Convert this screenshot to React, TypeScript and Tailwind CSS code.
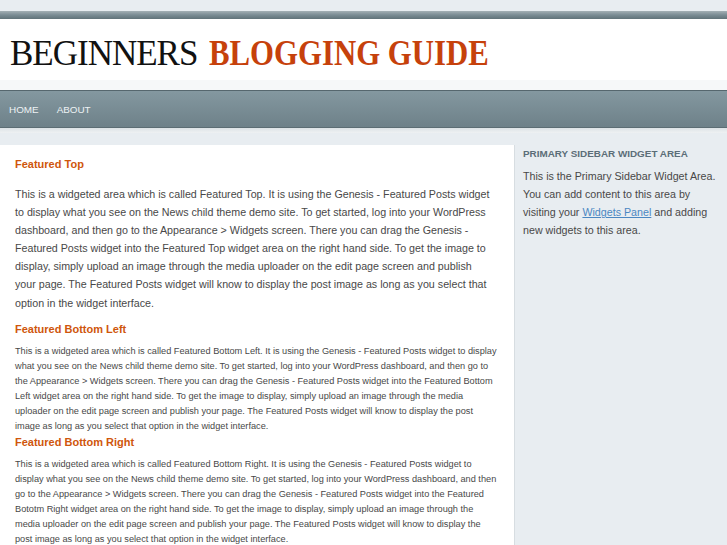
import React from 'react'

const featuredTop = [
  'This is a widgeted area which is called Featured Top. It is using the Genesis - Featured Posts widget',
  'to display what you see on the News child theme demo site. To get started, log into your WordPress',
  'dashboard, and then go to the Appearance > Widgets screen. There you can drag the Genesis -',
  'Featured Posts widget into the Featured Top widget area on the right hand side. To get the image to',
  'display, simply upload an image through the media uploader on the edit page screen and publish',
  'your page. The Featured Posts widget will know to display the post image as long as you select that',
  'option in the widget interface.',
]

const bottomLeft = [
  'This is a widgeted area which is called Featured Bottom Left. It is using the Genesis - Featured Posts widget to display',
  'what you see on the News child theme demo site. To get started, log into your WordPress dashboard, and then go to',
  'the Appearance > Widgets screen. There you can drag the Genesis - Featured Posts widget into the Featured Bottom',
  'Left widget area on the right hand side. To get the image to display, simply upload an image through the media',
  'uploader on the edit page screen and publish your page. The Featured Posts widget will know to display the post',
  'image as long as you select that option in the widget interface.',
]

const bottomRight = [
  'This is a widgeted area which is called Featured Bottom Right. It is using the Genesis - Featured Posts widget to',
  'display what you see on the News child theme demo site. To get started, log into your WordPress dashboard, and then',
  'go to the Appearance > Widgets screen. There you can drag the Genesis - Featured Posts widget into the Featured',
  'Bototm Right widget area on the right hand side. To get the image to display, simply upload an image through the',
  'media uploader on the edit page screen and publish your page. The Featured Posts widget will know to display the',
  'post image as long as you select that option in the widget interface.',
]

function Lines({ lines }: { lines: string[] }) {
  return (
    <>
      {lines.map((l, i) => (
        <span key={i} className="block whitespace-nowrap">
          {l}
        </span>
      ))}
    </>
  )
}

export default function App() {
  return (
    <div
      className="min-h-screen bg-[#e8edf1] text-[#444]"
      style={{ fontFamily: '"Liberation Sans", Arial, sans-serif' }}
    >
      <div className="h-[11px]" />
      <div className="h-[8px] bg-gradient-to-b from-[#a4b0b5] via-[#7a8c94] to-[#617379]" />

      {/* header */}
      <div className="h-[61px] bg-white pl-[10px] pt-[18px]">
        <div
          className="whitespace-nowrap text-[35px] leading-[34px]"
          style={{ fontFamily: '"Liberation Serif", "Times New Roman", serif' }}
        >
          <span className="tracking-[-1px] text-[#111]">BEGINNERS</span>{' '}
          <span className="ml-[3px] inline-block origin-left scale-x-[0.88] font-bold text-[#c6410b]">
            BLOGGING GUIDE
          </span>
        </div>
      </div>
      <div className="h-[10px] bg-[#f6f8f9]" />

      {/* nav */}
      <div className="flex h-[38px] items-center border-t border-b border-t-[#56676e] border-b-[#5c6d74] bg-gradient-to-b from-[#8498a0] to-[#6e8189] pt-[3px]">
        <a className="px-[9px] text-[9.9px] uppercase text-[#edf2f4]">Home</a>
        <a className="px-[9px] text-[9.9px] uppercase text-[#edf2f4]">About</a>
      </div>
      <div className="h-[5px] bg-gradient-to-b from-[#dde3e6] to-[#eef1f3]" />

      <div className="mt-[12px] flex">
        {/* content */}
        <div className="min-h-[400px] w-[515px] shrink-0 overflow-hidden border-r border-[#d7dde1] bg-white pl-[15px] pt-[12px]">
          <h2 className="text-[11px] font-bold leading-[14px] text-[#cf560c]">Featured Top</h2>
          <p className="mt-[14px] text-[10.7px] leading-[18.1px] text-[#484848]">
            <Lines lines={featuredTop} />
          </p>

          <h2 className="mt-[10px] text-[11px] font-bold leading-[14px] text-[#cf560c]">Featured Bottom Left</h2>
          <p className="mt-[8px] text-[9.2px] leading-[15px] text-[#484848]">
            <Lines lines={bottomLeft} />
          </p>

          <h2 className="mt-[1px] text-[11px] font-bold leading-[14px] text-[#cf560c]">Featured Bottom Right</h2>
          <p className="mt-[8px] text-[9.2px] leading-[15px] text-[#484848]">
            <Lines lines={bottomRight} />
          </p>
        </div>

        {/* sidebar */}
        <div className="flex-1 pl-[8px] pt-[3px]">
          <h4 className="text-[9.9px] font-bold uppercase leading-[12px] text-[#5b6d78]">
            Primary Sidebar Widget Area
          </h4>
          <p className="mt-[7px] text-[10.7px] leading-[18.1px] text-[#484848]">
            <span className="block whitespace-nowrap">This is the Primary Sidebar Widget Area.</span>
            <span className="block whitespace-nowrap">You can add content to this area by</span>
            <span className="block whitespace-nowrap">
              visiting your <a className="text-[#4b87c2] underline">Widgets Panel</a> and adding
            </span>
            <span className="block whitespace-nowrap">new widgets to this area.</span>
          </p>
        </div>
      </div>
    </div>
  )
}
